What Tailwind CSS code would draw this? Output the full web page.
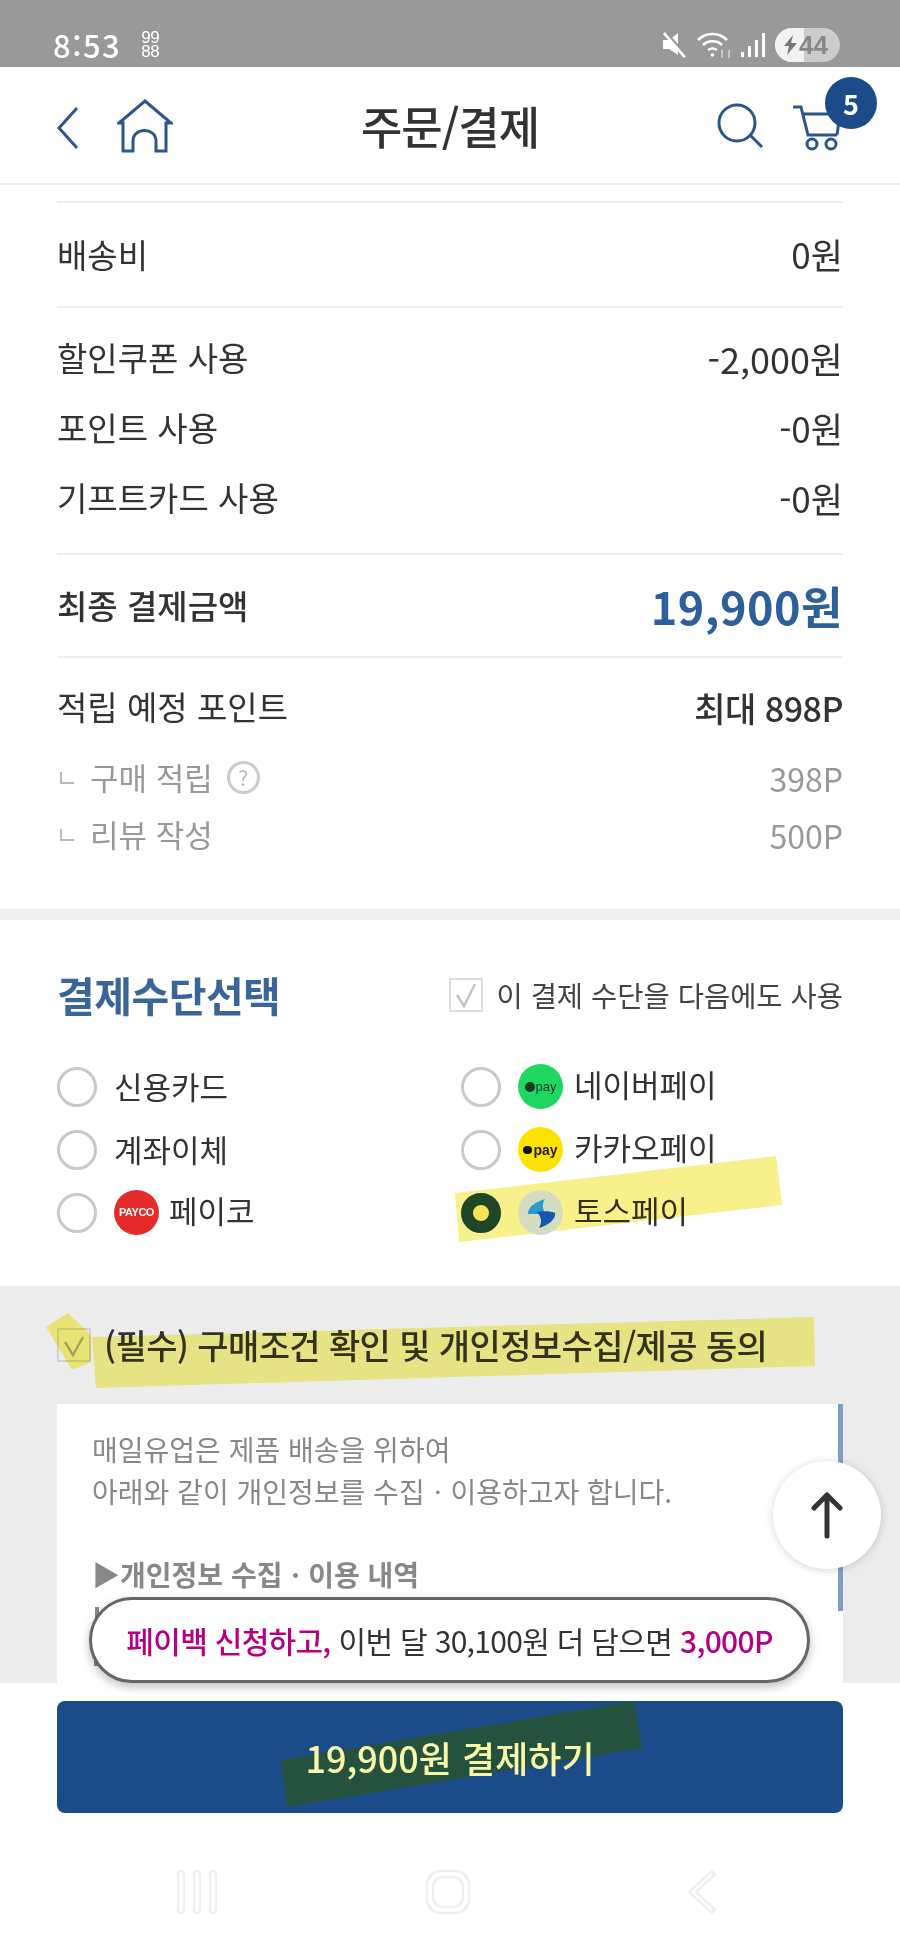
<!DOCTYPE html>
<html lang="ko">
<head>
<meta charset="utf-8" />
<title>주문/결제</title>
<script src="https://cdn.jsdelivr.net/npm/@tailwindcss/browser@4"></script>
</head>
<body class="relative w-[900px] h-[1950px] overflow-hidden bg-white text-[#333] font-['Noto_Sans_CJK_KR','Liberation_Sans',sans-serif]">

<!-- status bar -->
<div class="h-[67px] bg-[#999999] flex items-center pl-[53px] pr-[60px] pt-[22px] text-white">
  <span class="text-[31px] font-medium leading-none tracking-[1.5px]">8:53</span>
  <span class="ml-[20px] flex flex-col text-[17px] leading-[14px] font-['Liberation_Sans'] tracking-[-0.5px]"><span>99</span><span>88</span></span>
  <div class="ml-auto flex items-center">
    <svg width="26" height="26" viewBox="0 0 26 26" fill="#fff"><path d="M2 8h6l9-7v22l-9-6H2z"/><path d="M3 1l21 24" stroke="#fff" stroke-width="3"/><path d="M6 1l20 23" stroke="#999" stroke-width="2"/></svg>
    <svg class="ml-[10px]" width="36" height="28" viewBox="0 0 36 28" fill="none" stroke="#fff" stroke-width="2.600"><path d="M1 9c8-8 21-8 29 0"/><path d="M6 14c5-5 14-5 19 0"/><path d="M11 19c3-2 6-2 9 0"/><circle cx="15.500" cy="24" r="1.800" fill="#fff" stroke="none"/><path d="M25 19v8M32 19v8" stroke="#c4c4c4" stroke-width="2"/></svg>
    <div class="ml-[8px] flex items-end gap-[4px] h-[24px]">
      <span class="w-[3px] h-[5px] bg-white"></span><span class="w-[3px] h-[11px] bg-white"></span><span class="w-[3px] h-[17px] bg-white"></span><span class="w-[3px] h-[24px] bg-white"></span>
    </div>
    <div class="ml-[10px] w-[65px] h-[34px] rounded-full overflow-hidden relative flex bg-[#cccccc]">
      <span class="w-[29px] h-full bg-[#f2f2f2]"></span>
      <svg class="absolute left-[8px] top-[7px]" width="16" height="20" viewBox="0 0 16 20" fill="#777"><path d="M10 0L1 11h5l-2 9 10-12H8z"/></svg>
      <span class="absolute left-[24px] top-0 h-full flex items-center text-[26px] font-bold text-[#888] font-['Liberation_Sans'] leading-none">44</span>
    </div>
  </div>
</div>

<!-- header -->
<header class="relative h-[118px] flex items-center justify-center border-b-[2px] border-[#f0f0f0]">
  <svg class="absolute left-[55px] top-[39px]" width="26" height="44" viewBox="0 0 26 44" fill="none" stroke="#2b5688" stroke-width="3"><path d="M22 2L4 22l18 20"/></svg>
  <svg class="absolute left-[117px] top-[32px]" width="56" height="54" viewBox="0 0 56 54" fill="none" stroke="#2b5688" stroke-width="3"><path d="M2 24L28 2l26 22h-5v28H39V42c0-14-23-14-23 0v10H6V24z"/></svg>
  <h1 class="text-[45px] font-medium leading-none tracking-[-1px] text-[#333]">주문/결제</h1>
  <svg class="absolute left-[715px] top-[35px]" width="50" height="50" viewBox="0 0 50 50" fill="none" stroke="#2b5688" stroke-width="3"><circle cx="22" cy="21" r="18"/><path d="M35 33l12 12"/></svg>
  <svg class="absolute left-[790px] top-[36px]" width="56" height="50" viewBox="0 0 56 50" fill="none" stroke="#2b5688" stroke-width="3"><path d="M3 4h8l7 28h29M13 11h37l-3 21"/><circle cx="22" cy="41" r="5"/><circle cx="41" cy="41" r="5"/></svg>
  <span class="absolute left-[825px] top-[10px] w-[52px] h-[52px] rounded-full bg-[#1c4b8a] text-white text-[27px] font-bold flex items-center justify-center leading-none">5</span>
</header>

<!-- price summary -->
<section class="px-[57px] pt-[16px] text-[#333]">
  <div class="h-[2px] bg-[#eeeeee]"></div>
  <div class="h-[105px] flex items-center justify-between text-[33px] border-b-[2px] border-[#eeeeee]"><span>배송비</span><span class="text-[35px]">0원</span></div>
  <div class="pt-[15px] pb-[20px] border-b-[2px] border-[#eeeeee] text-[33px]">
    <div class="h-[70px] flex items-center justify-between"><span>할인쿠폰 사용</span><span class="text-[36px]">-2,000원</span></div>
    <div class="h-[70px] flex items-center justify-between"><span>포인트 사용</span><span class="text-[35px]">-0원</span></div>
    <div class="h-[70px] flex items-center justify-between"><span>기프트카드 사용</span><span class="text-[35px]">-0원</span></div>
  </div>
  <div class="h-[103px] flex items-center justify-between border-b-[2px] border-[#eeeeee]">
    <span class="text-[33px] font-medium">최종 결제금액</span>
    <span class="text-[45px] font-bold text-[#2f5f9b] tracking-[0.5px]">19,900원</span>
  </div>
  <div class="pt-[14px] pb-[46px]">
    <div class="h-[70px] flex items-center justify-between"><span class="text-[33px]">적립 예정 포인트</span><span class="text-[34px] font-medium tracking-[-0.5px]">최대 898P</span></div>
    <div class="mt-[7px] h-[57px] flex items-center justify-between text-[#999] text-[31px]">
      <span class="flex items-center"><span class="w-[14px] h-[12px] ml-[3px] mr-[16px] border-l-[2px] border-b-[2px] border-[#bbb]"></span>구매 적립<span class="ml-[14px] w-[33px] h-[33px] rounded-full border-[3px] border-[#ccc] text-[#bbb] text-[21px] flex items-center justify-center leading-none">?</span></span>
      <span class="text-[32px]">398P</span>
    </div>
    <div class="h-[57px] flex items-center justify-between text-[#999] text-[31px]">
      <span class="flex items-center"><span class="w-[14px] h-[12px] ml-[3px] mr-[16px] border-l-[2px] border-b-[2px] border-[#bbb]"></span>리뷰 작성</span>
      <span class="text-[32px]">500P</span>
    </div>
  </div>
</section>

<div class="h-[11px] bg-[#efefef]"></div>

<!-- payment method -->
<section class="h-[366px] px-[57px] pt-[45px]">
  <div class="h-[60px] flex items-center justify-between">
    <h2 class="text-[41px] font-bold text-[#3a6598] tracking-[-0.5px]">결제수단선택</h2>
    <label class="flex items-center gap-[13px] text-[28.500px] text-[#444]">
      <span class="w-[34px] h-[34px] border-[2px] border-[#ddd] flex items-center justify-center">
        <svg width="24" height="26" viewBox="0 0 24 26" fill="none" stroke="#c4c4c4" stroke-width="2.500"><path d="M3 13l7 11L21 2"/></svg>
      </span>
      이 결제 수단을 다음에도 사용
    </label>
  </div>
  <div class="mt-[30px] grid grid-cols-[404px_1fr] auto-rows-[63px] text-[31px] text-[#333]">
    <div class="flex items-center"><span class="w-[40px] h-[40px] rounded-full border-[3px] border-[#c9c9c9]"></span><span class="ml-[17px]">신용카드</span></div>
    <div class="flex items-center"><span class="w-[40px] h-[40px] rounded-full border-[3px] border-[#c9c9c9]"></span>
      <span class="ml-[17px] w-[45px] h-[45px] rounded-full bg-[#1ed760] flex items-center justify-center text-[13px] text-[#1e3a25] font-medium gap-[1px] leading-none font-['Liberation_Sans']"><span class="w-[10px] h-[10px] rounded-full bg-[#123a20]"></span>pay</span>
      <span class="ml-[11px] mt-[-4px]">네이버페이</span></div>
    <div class="flex items-center"><span class="w-[40px] h-[40px] rounded-full border-[3px] border-[#c9c9c9]"></span><span class="ml-[17px]">계좌이체</span></div>
    <div class="flex items-center"><span class="w-[40px] h-[40px] rounded-full border-[3px] border-[#c9c9c9]"></span>
      <span class="ml-[17px] w-[45px] h-[45px] rounded-full bg-[#fde400] flex items-center justify-center text-[14px] text-[#222] font-bold gap-[1px] leading-none font-['Liberation_Sans']"><span class="w-[9px] h-[8px] rounded-full bg-[#111]"></span>pay</span>
      <span class="ml-[11px] mt-[-4px]">카카오페이</span></div>
    <div class="flex items-center"><span class="w-[40px] h-[40px] rounded-full border-[3px] border-[#c9c9c9]"></span>
      <span class="ml-[17px] w-[45px] h-[45px] rounded-full bg-[#e52a2a] flex items-center justify-center text-[11px] text-white font-bold leading-none tracking-[-0.5px] font-['Liberation_Sans']">PAYCO</span>
      <span class="ml-[10px] mt-[-4px]">페이코</span></div>
    <div class="flex items-center"><span class="w-[40px] h-[40px] rounded-full border-[12px] border-[#1f4a44] bg-[#fdf3a0]"></span>
      <span class="relative z-20 ml-[17px] w-[45px] h-[45px] rounded-full bg-[#d4dcc2] flex items-center justify-center">
        <svg width="32" height="32" viewBox="0 0 32 32"><path d="M3 17C3 10 10 5 20 2c-3 5-3 10 1 15z" fill="#2a9ad0"/><path d="M12 15c7-1 14-1 18 1 1 6-6 12-16 15 3-5 3-11-2-16z" fill="#1158b0"/></svg>
      </span>
      <span class="ml-[11px] mt-[-4px]">토스페이</span></div>
  </div>
</section>

<!-- agreement -->
<section class="relative h-[397px] bg-[#ececec] px-[57px] pt-[42px]">
  <div class="h-[34px] flex items-center">
    <span class="w-[34px] h-[34px] border-[2px] border-[#d2d2d2] flex items-center justify-center shrink-0">
      <svg width="24" height="24" viewBox="0 0 24 24" fill="none" stroke="#aaa" stroke-width="2.500"><path d="M3 9l8 13L21 4"/></svg>
    </span>
    <span class="ml-[13px] text-[34px] leading-[34px] font-medium text-[#333] tracking-[-0.6px] whitespace-nowrap">(필수) 구매조건 확인 및 개인정보수집/제공 동의</span>
  </div>
  <div class="relative mt-[42px] h-[279px] bg-white pl-[35px] pt-[24px] overflow-hidden text-[28px] text-[#888]">
    <p class="h-[42px] leading-[42px]">매일유업은 제품 배송을 위하여</p>
    <p class="h-[42px] leading-[42px]">아래와 같이 개인정보를 수집ㆍ이용하고자 합니다.</p>
    <p class="mt-[41px] h-[42px] leading-[42px] font-bold text-[#888]">▶개인정보 수집ㆍ이용 내역</p>
    <span class="absolute left-[38px] top-[203px] w-[4px] h-[12px] bg-[#888]"></span>
    <span class="absolute left-[37px] top-[256px] w-[8px] h-[6px] bg-[#888]"></span>
    <span class="absolute right-0 top-0 w-[5px] h-[207px] bg-[#7f9fcb]"></span>
  </div>
</section>

<!-- pay button -->
<div class="px-[57px] pt-[18px]">
  <button class="relative w-full h-[112px] overflow-hidden rounded-[8px] bg-[#1c4b8a] text-[#f8f8a8] text-[36px] font-medium flex items-center justify-center">
    <svg class="absolute left-0 top-0" width="786" height="112" viewBox="0 0 786 112"><polygon points="224,59 577,0 585,47 230,106" fill="#24523f"/></svg>
    <span class="relative">19,900원 결제하기</span>
  </button>
</div>

<!-- nav bar -->
<div class="mt-[55px] flex items-center">
  <svg class="ml-[175px]" width="44" height="46" viewBox="0 0 44 46" fill="none" stroke="#eeeeee" stroke-width="2.500"><rect x="3" y="2" width="6" height="42" rx="3"/><rect x="19" y="2" width="6" height="42" rx="3"/><rect x="35" y="2" width="6" height="42" rx="3"/></svg>
  <svg class="ml-[205px]" width="48" height="46" viewBox="0 0 48 46" fill="none" stroke="#eeeeee" stroke-width="2.500"><rect x="3" y="2" width="42" height="42" rx="14"/><rect x="9" y="8" width="30" height="30" rx="10"/></svg>
  <svg class="ml-[212px]" width="34" height="48" viewBox="0 0 34 48" fill="none" stroke="#eeeeee" stroke-width="2.500"><path d="M28 3L5 24l23 21 3-3L12 24 31 6z"/></svg>
</div>

<!-- marker highlights -->
<svg class="absolute left-0 top-0 z-10 mix-blend-multiply pointer-events-none" width="900" height="1950" viewBox="0 0 900 1950">
  <polygon points="455,1193 776,1156 782,1205 459,1242" fill="#f8f08a"/>
  <polygon points="92,1337 814,1317 815,1366 96,1388" fill="#f8f68e"/>
  <polygon points="68,1313 46,1327 72,1370 91,1362 91,1335" fill="#faf67e"/>
</svg>

<!-- floating pill and scroll-top -->
<div class="absolute z-30 left-[89px] top-[1597px] w-[721px] h-[86px] rounded-full bg-white border-[3px] border-[#666] shadow-[0_4px_10px_rgba(0,0,0,0.25)] flex items-center justify-center text-[30px] tracking-[-0.7px] text-[#333] whitespace-nowrap">
  <span class="text-[#b5007f] font-medium">페이백 신청하고,</span><span class="ml-[8px]">이번 달 30,100원 더 담으면</span><span class="ml-[8px] text-[#b5007f] font-medium">3,000P</span>
</div>
<button class="absolute z-30 left-[773px] top-[1461px] w-[108px] h-[108px] rounded-full bg-white shadow-[0_1px_8px_rgba(0,0,0,0.18)] flex items-center justify-center">
  <svg width="34" height="48" viewBox="0 0 34 48" fill="none" stroke="#333" stroke-width="5" stroke-linecap="round" stroke-linejoin="round"><path d="M17 45V4M4 17L17 4l13 13"/></svg>
</button>
</body>
</html>
